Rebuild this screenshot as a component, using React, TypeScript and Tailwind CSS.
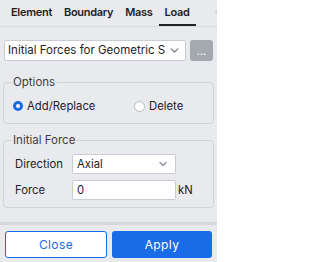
import { ChevronDown, ChevronLeft } from 'lucide-react';

const tabs = ['Element', 'Boundary', 'Mass', 'Load'];

export default function App() {
  return (
    <div
      className="w-[217px] h-[262px] bg-[#e9eaee] flex flex-col overflow-hidden text-[#1f2228]"
      style={{ fontFamily: 'Inter, "Noto Sans", sans-serif' }}
    >
      {/* tab strip */}
      <div className="relative h-[27px] shrink-0 flex items-stretch pl-[5px] border-b border-[#d9dbe0]">
        {tabs.map((t) => (
          <div
            key={t}
            className={
              'px-[6px] flex items-center pt-[1px] text-[11px] font-semibold tracking-[-0.3px] ' +
              (t === 'Load' ? 'border-b-2 border-[#202226]' : 'border-b-2 border-transparent')
            }
          >
            {t}
          </div>
        ))}
        <ChevronLeft className="absolute right-[-6px] top-[6px] text-[#b5b8be]" size={12} strokeWidth={2} />
      </div>

      {/* load type select */}
      <div className="mt-[13px] mx-[4px] flex items-center gap-[4px]">
        <div className="flex-1 min-w-0 h-[21px] bg-white border border-[#c9ccd2] rounded-[2px] flex items-center pl-[3px] pr-[4px]">
          <span className="flex-1 min-w-0 text-[11.5px] whitespace-nowrap overflow-hidden">Initial Forces for Geometric S</span>
          <ChevronDown size={13} strokeWidth={2.5} className="text-[#7a7e86] shrink-0 ml-[3px]" />
        </div>
        <div className="w-[23px] h-[21px] shrink-0 rounded-[3px] bg-[#a4a8af] text-white text-[11px] flex items-center justify-center leading-none pt-[2px]">
          ...
        </div>
      </div>

      {/* options */}
      <fieldset className="mt-[14px] mx-[3px] border border-[#d1d3d8] rounded-[4px] pl-[7px] pr-[7px] pb-[9px]">
        <legend className="px-[2px] text-[11.5px] leading-[15px] text-[#3b3f46]">Options</legend>
        <div className="flex items-center mt-[8px] ml-[2px] h-[16px] text-[11.3px]">
          <div className="w-[121px] flex items-center gap-[4px]">
            <span className="w-[10px] h-[10px] rounded-full border-[3px] border-[#1a6be8] bg-white" />
            <span>Add/Replace</span>
          </div>
          <div className="flex items-center gap-[4px]">
            <span className="w-[11px] h-[11px] rounded-full border border-[#b9bcc2] bg-white" />
            <span>Delete</span>
          </div>
        </div>
      </fieldset>

      {/* initial force */}
      <fieldset className="mt-[9px] mx-[3px] border border-[#d1d3d8] rounded-[4px] pl-[7px] pr-[7px] pb-[7px]">
        <legend className="px-[2px] text-[11.5px] leading-[15px] text-[#3b3f46]">Initial Force</legend>
        <div className="flex items-center mt-[6px] ml-[4px] text-[11.3px]">
          <span className="w-[57px]">Direction</span>
          <div className="w-[104px] h-[20px] bg-white border border-[#c9ccd2] rounded-[2px] flex items-center pl-[4px] pr-[6px]">
            <span className="flex-1">Axial</span>
            <ChevronDown size={12} strokeWidth={2.5} className="text-[#8a8e96]" />
          </div>
        </div>
        <div className="flex items-center mt-[6px] ml-[4px] text-[11.3px]">
          <span className="w-[57px]">Force</span>
          <div className="w-[104px] h-[20px] bg-white border border-[#c9ccd2] rounded-[2px] flex items-center pl-[4px]">
            0
          </div>
          <span className="ml-[2px]">kN</span>
        </div>
      </fieldset>

      <div className="mt-[14px] h-[3px] bg-[#d6d8dc] shrink-0" />

      {/* actions */}
      <div className="mt-[6px] px-[5px] flex gap-[5px]">
        <button className="flex-1 h-[27px] bg-white border border-[#1a6be8] rounded-[3px] text-[#1a6be8] text-[12px] tracking-[0.4px]">
          Close
        </button>
        <button className="flex-1 h-[27px] bg-[#1a6be8] rounded-[3px] text-white text-[12px] tracking-[0.4px]">
          Apply
        </button>
      </div>
    </div>
  );
}
